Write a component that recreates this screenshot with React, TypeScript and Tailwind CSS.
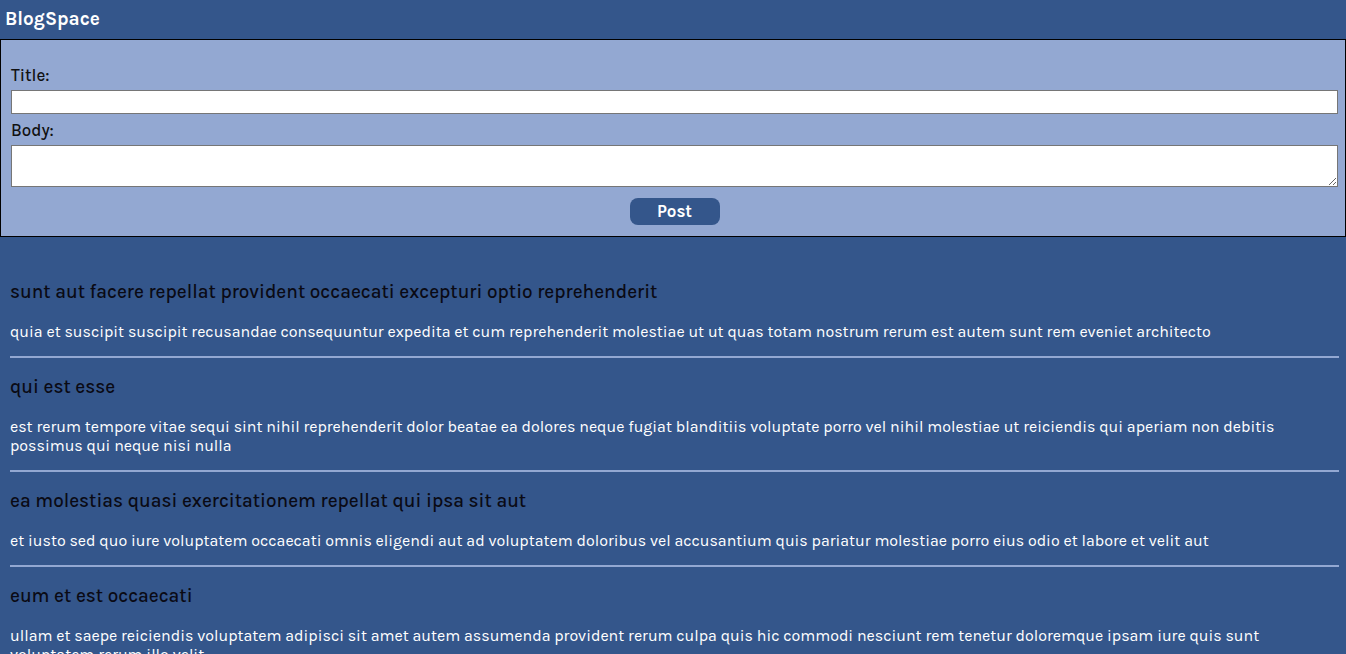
import React from "react";

const posts = [
  {
    title: "sunt aut facere repellat provident occaecati excepturi optio reprehenderit",
    body: "quia et suscipit suscipit recusandae consequuntur expedita et cum reprehenderit molestiae ut ut quas totam nostrum rerum est autem sunt rem eveniet architecto",
  },
  {
    title: "qui est esse",
    body: "est rerum tempore vitae sequi sint nihil reprehenderit dolor beatae ea dolores neque fugiat blanditiis voluptate porro vel nihil molestiae ut reiciendis qui aperiam non debitis possimus qui neque nisi nulla",
  },
  {
    title: "ea molestias quasi exercitationem repellat qui ipsa sit aut",
    body: "et iusto sed quo iure voluptatem occaecati omnis eligendi aut ad voluptatem doloribus vel accusantium quis pariatur molestiae porro eius odio et labore et velit aut",
  },
  {
    title: "eum et est occaecati",
    body: "ullam et saepe reiciendis voluptatem adipisci sit amet autem assumenda provident rerum culpa quis hic commodi nesciunt rem tenetur doloremque ipsam iure quis sunt voluptatem rerum illo velit",
  },
];

export default function App() {
  return (
    <div className="min-h-screen bg-[#34568b] font-['Karla','Lato',sans-serif]">
      <header className="h-[39px] flex items-center px-[5px]">
        <h1 className="text-[19px] font-bold text-white">BlogSpace</h1>
      </header>
      <form className="border border-black bg-[#93a8d2] pl-[10px] pr-[7px] pt-[26px] pb-[11px] flex flex-col">
        <label className="text-[17px] font-medium leading-[18px] text-[#111] mb-[6px]">Title:</label>
        <input className="h-[24px] bg-white border border-[#767676]" />
        <label className="text-[17px] font-medium leading-[18px] text-[#111] mt-[7px] mb-[6px]">Body:</label>
        <textarea className="h-[42px] bg-white border border-[#767676] resize-y" />
        <div className="flex justify-center mt-[11px]">
          <button type="button" className="w-[90px] h-[27px] rounded-[8px] bg-[#34568b] text-white font-bold text-[17px] leading-none">
            Post
          </button>
        </div>
      </form>
      <div className="pl-[10px] pr-[7px] pt-[43px]">
        {posts.map((p, i) => (
          <div key={i}>
            <h3 className="text-[19px] font-medium leading-[24px] text-[#0a0a14]">{p.title}</h3>
            <p className="mt-[18px] text-[16px] leading-[19px] text-white">{p.body}</p>
            <hr className="mt-[15px] mb-[17px] border-0 h-[2px] bg-[#93a8d2]" />
          </div>
        ))}
      </div>
    </div>
  );
}
